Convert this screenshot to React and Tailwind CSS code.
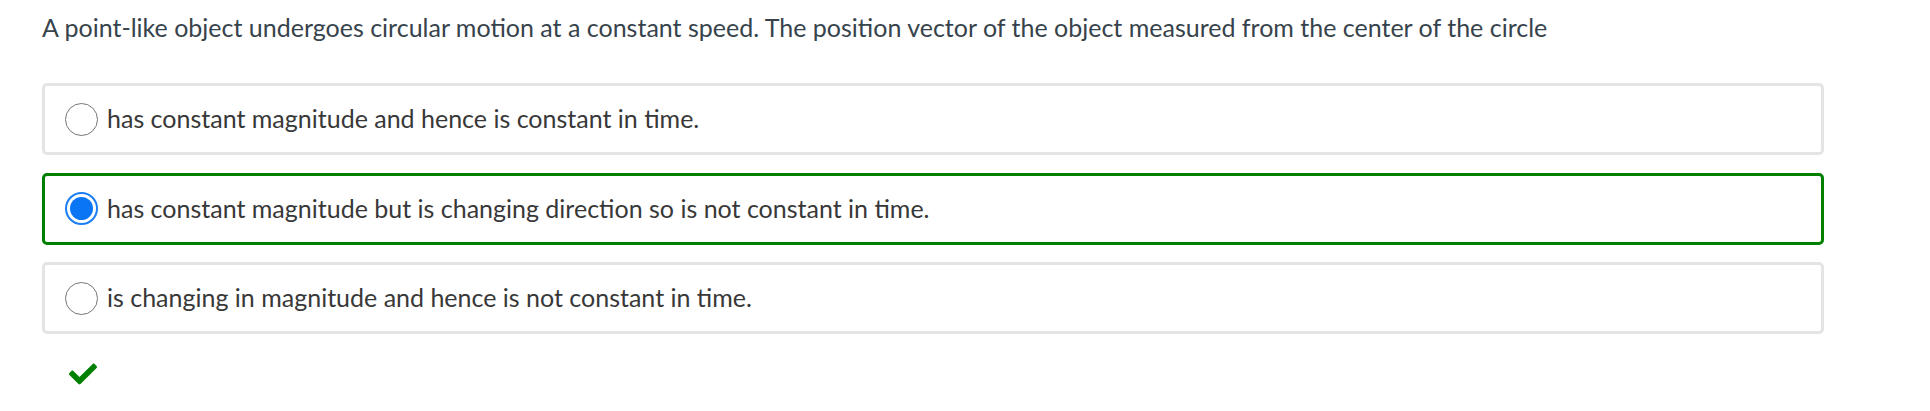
import React, { useState } from 'react';
import { FaCheck } from 'react-icons/fa';

const options = [
    'has constant magnitude and hence is constant in time.',
    'has constant magnitude but is changing direction so is not constant in time.',
    'is changing in magnitude and hence is not constant in time.',
];

function Radio({ checked }) {
    if (checked) {
        return (
            <span className="w-[33px] h-[33px] shrink-0 rounded-full border-2 border-[#1a7ef5] bg-white flex items-center justify-center">
                <span className="w-[23px] h-[23px] rounded-full bg-[#0a75f5]" />
            </span>
        );
    }
    return <span className="w-[33px] h-[33px] shrink-0 rounded-full border-[1.5px] border-[#767676] bg-white" />;
}

export default function App() {
    const [selected, setSelected] = useState(1);

    return (
        <div className="bg-white w-[1930px] h-[411px] pl-[42px] pt-[12px] font-['Lato',sans-serif]">
            <p className="text-[25px] leading-[30px] text-[#37434c]">
                A point-like object undergoes circular motion at a constant speed. The position vector of the object measured from the center of the circle
            </p>

            <div className="mt-[41px] w-[1782px] flex flex-col gap-[17.5px]">
                {options.map((text, i) => (
                    <button
                        key={i}
                        onClick={() => setSelected(i)}
                        className={`h-[72px] flex items-center gap-[9px] pl-[20px] rounded-[5px] border-[3px] text-left ${
                            selected === i ? 'border-[#008000]' : 'border-[#e4e4e4]'
                        }`}
                    >
                        <Radio checked={selected === i} />
                        <span className="text-[25px] text-[#383838]">{text}</span>
                    </button>
                ))}
            </div>

            <div className="mt-[26px] pl-[27px] text-[#008000]">
                <FaCheck size={28} />
            </div>
        </div>
    );
}
